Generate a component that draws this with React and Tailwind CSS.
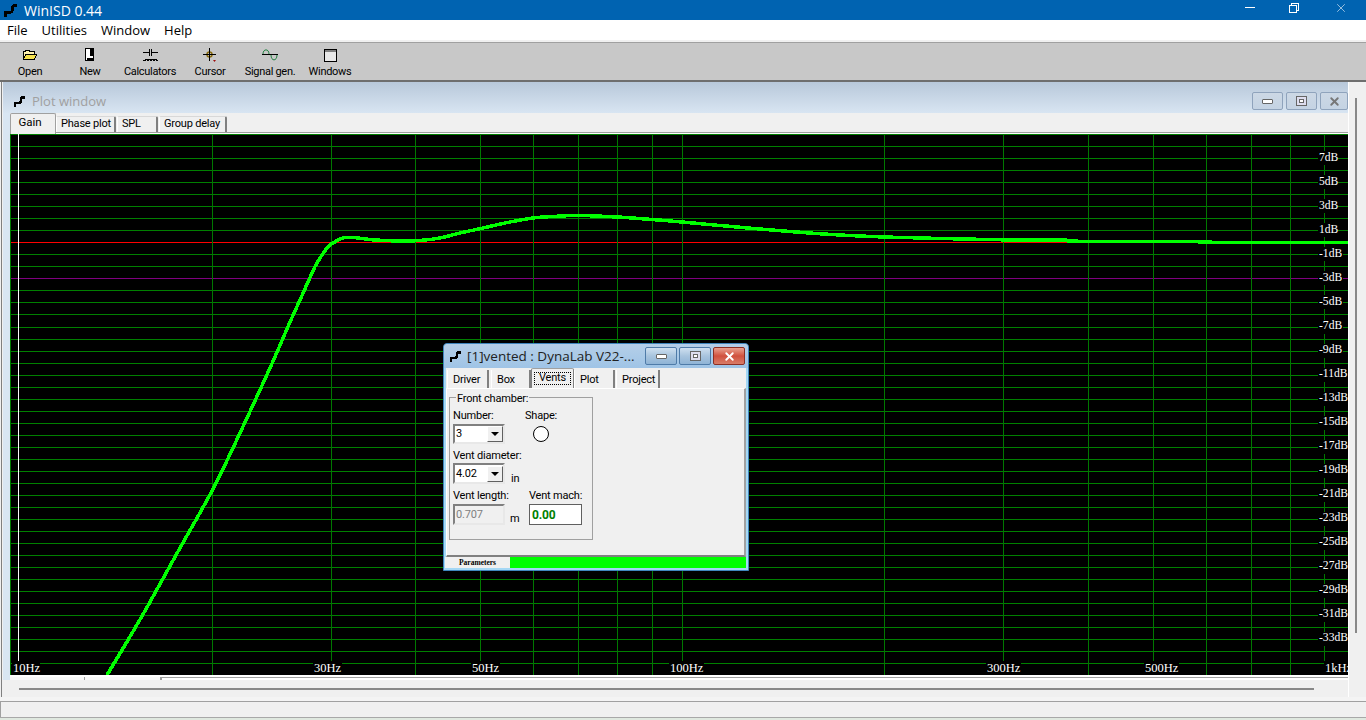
import { X } from 'lucide-react';

const UI_FONT = { fontFamily: '"Open Sans", "Liberation Sans", sans-serif' };
const SMALL_FONT = { fontFamily: 'Roboto, "Liberation Sans", sans-serif' };

const MENU = ['File', 'Utilities', 'Window', 'Help'];

const TOOLS = [
  { label: 'Open', icon: OpenIcon },
  { label: 'New', icon: NewIcon },
  { label: 'Calculators', icon: CalcIcon },
  { label: 'Cursor', icon: CursorIcon },
  { label: 'Signal gen.', icon: SignalIcon },
  { label: 'Windows', icon: WindowsIcon },
];

// plot scale: 12.03px per dB, 0dB sits on row 242
const rowOf = (k) => Math.round(242.3 + 12.03 * k);
const H_LINES = Array.from({ length: 45 }, (_, i) => i - 9);
const V_LINES = [10, 212, 331, 415, 480, 533, 578, 617, 652, 682, 884, 1003, 1088, 1153, 1206, 1251, 1290, 1324];
const DB_LABELS = [7, 5, 3, 1, -1, -3, -5, -7, -9, -11, -13, -15, -17, -19, -21, -23, -25, -27, -29, -31, -33];
const HZ_LABELS = [
  ['10Hz', 12, 28],
  ['30Hz', 313, 29],
  ['50Hz', 471, 29],
  ['100Hz', 669, 35],
  ['300Hz', 986, 35],
  ['500Hz', 1144, 35],
  ['1kHz', 1324, 24],
];
const CURVE = [
  [107, 675], [128, 640], [150, 602], [180, 548], [213, 489], [240, 433], [270, 368], [290, 322], [300, 300],
  [312, 273], [317, 263], [327, 248], [333, 243], [343, 238], [353, 237.5], [375, 240], [400, 241], [420, 240.5],
  [440, 238], [460, 233], [480, 228.7], [505, 223], [533, 218], [553, 216.5], [578, 215.5], [617, 217], [652, 219.5],
  [682, 222], [720, 225.5], [760, 229], [800, 232.3], [840, 235], [884, 237], [940, 238.5], [1003, 239.8], [1074, 240.3],
  [1076, 241.3], [1204, 241.3], [1206, 242.3], [1348, 242.3],
];

// catmull-rom through the measured points so the knee doesn't kink
function curvePath(pts) {
  let d = `M${pts[0][0]} ${pts[0][1]}`;
  for (let i = 0; i < pts.length - 1; i++) {
    const p0 = pts[Math.max(i - 1, 0)];
    const p1 = pts[i];
    const p2 = pts[i + 1];
    const p3 = pts[Math.min(i + 2, pts.length - 1)];
    const c1x = p1[0] + (p2[0] - p0[0]) / 6;
    const c1y = p1[1] + (p2[1] - p0[1]) / 6;
    const c2x = p2[0] - (p3[0] - p1[0]) / 6;
    const c2y = p2[1] - (p3[1] - p1[1]) / 6;
    d += ` C${c1x} ${c1y} ${c2x} ${c2y} ${p2[0]} ${p2[1]}`;
  }
  return d;
}

function AppIcon({ className = '' }) {
  return (
    <svg viewBox="0 0 13 13" className={className} fill="none" stroke="black" strokeWidth="2.800" shapeRendering="crispEdges">
      <path d="M2 13 V8.500 H7 Q8.500 8.500 8.500 6 Q8.500 2.500 10.500 2.500 H13" />
    </svg>
  );
}

function OpenIcon() {
  return (
    <svg width="16" height="12" viewBox="0 0 16 12" shapeRendering="crispEdges">
      <path d="M1.500 10.500 V2.500 H3 L4 1.500 H7 L8 2.500 H12.500 V4.500" fill="#fff3b0" stroke="black" />
      <path d="M1.500 10.500 L4 5 H15 L12.500 10.500 Z" fill="#f4e04d" stroke="black" />
    </svg>
  );
}

function NewIcon() {
  return (
    <svg width="10" height="14" viewBox="0 0 10 14" shapeRendering="crispEdges">
      <rect x="0.500" y="0.500" width="8" height="12" fill="white" stroke="black" />
      <rect x="5" y="1" width="4" height="7" fill="black" />
      <rect x="2" y="10" width="6" height="3" fill="black" />
    </svg>
  );
}

function CalcIcon() {
  return (
    <svg width="15" height="13" viewBox="0 0 15 13" fill="none" stroke="black" shapeRendering="crispEdges">
      <path d="M0 3.500 H6 M6.500 0 V7 M8.500 0 V7 M9 3.500 H15" />
      <path d="M0 11.500 H2 M13 11.500 H15 M2 12 V10.500 H4 V12 M5 12 V10.500 H7 V12 M8 12 V10.500 H10 V12 M11 12 V10.500 H13 V12" />
    </svg>
  );
}

function CursorIcon() {
  return (
    <svg width="14" height="14" viewBox="0 0 14 14" fill="none" stroke="black">
      <circle cx="6.500" cy="6.500" r="2.500" stroke="#8a6d10" strokeWidth="1.500" />
      <path d="M6.500 0 V13 M0 6.500 H13" shapeRendering="crispEdges" />
      <path d="M10 12 H13 L11.500 14 Z" fill="#a01010" stroke="none" />
    </svg>
  );
}

function SignalIcon() {
  return (
    <svg width="16" height="12" viewBox="0 0 16 12" fill="none">
      <path d="M0 5.500 H16" stroke="black" shapeRendering="crispEdges" />
      <path d="M1 5 C1 -0.500 7 -0.500 7 5" stroke="#208040" />
      <path d="M9 6 C9 12.500 15 12.500 15 6" stroke="#208040" />
    </svg>
  );
}

function WindowsIcon() {
  return (
    <svg width="13" height="13" viewBox="0 0 13 13" shapeRendering="crispEdges">
      <rect x="0.500" y="0.500" width="12" height="12" fill="#e8e8e8" stroke="black" />
      <rect x="1" y="1" width="11" height="2" fill="#808080" />
    </svg>
  );
}

function TitleBar() {
  return (
    <div className="flex h-5 shrink-0 items-center bg-[#0063b1] text-white">
      <AppIcon className="ml-[3px] h-[14px] w-[14px]" />
      <span className="ml-[7px] text-[14px]" style={UI_FONT}>WinISD 0.44</span>
      <div className="ml-auto flex items-center">
        <div className="mb-[6px] mr-[34px] h-px w-[10px] bg-white" />
        <svg width="11" height="10" viewBox="0 0 11 10" fill="none" stroke="white" className="mb-[5px] mr-[34px]" shapeRendering="crispEdges">
          <rect x="0.500" y="2.500" width="7" height="7" />
          <path d="M2.500 2.500 V0.500 H9.500 V7.500 H7.500" />
        </svg>
        <X size={14} strokeWidth={1} className="mb-[5px] mr-[18px]" />
      </div>
    </div>
  );
}

function MenuBar() {
  return (
    <div className="flex h-5 shrink-0 items-center gap-[14px] bg-white pl-[7px] pt-[2px] text-[13px] text-black" style={UI_FONT}>
      {MENU.map((m) => <span key={m}>{m}</span>)}
    </div>
  );
}

function Toolbar() {
  return (
    <div className="shrink-0">
      <div className="h-[2px] bg-[#f0f0f0]" />
      <div className="h-px bg-[#a0a0a0]" />
      <div className="flex h-[37px] bg-[#c8c8c8]">
        {TOOLS.map((t) => {
          const Icon = t.icon;
          return (
            <div key={t.label} className="flex w-[60px] flex-col items-center pt-[5px]">
              <div className="flex h-[14px] items-center justify-center"><Icon /></div>
              <span className="mt-[3px] whitespace-nowrap text-[11px] leading-[14px] tracking-[-0.3px] text-black" style={SMALL_FONT}>{t.label}</span>
            </div>
          );
        })}
      </div>
      <div className="h-[2px] bg-[#6e6e6e]" />
    </div>
  );
}

function AeroButton({ kind, close, inactive, width }) {
  const look = close
    ? 'border-[#8c2f24] bg-gradient-to-b from-[#e8a090] via-[#d0503e] to-[#d87c68]'
    : inactive
      ? 'border-[#8fa3bc] bg-gradient-to-b from-[#ccd8e5] to-[#c4d3e3]'
      : 'border-[#4f7ba8] bg-gradient-to-b from-[#cfe0f0] via-[#a8c4de] to-[#8fb4d6]';
  return (
    <div className={`flex h-[18px] items-center justify-center rounded-[2px] border ${look}`} style={{ width }}>
      {kind === 'min' && <div className="h-[5px] w-[11px] rounded-[1px] border border-[#666] bg-white" />}
      {kind === 'max' && (
        <div className="flex h-[10px] w-[11px] items-center justify-center border border-[#666] bg-[#dde]">
          <div className="h-[4px] w-[5px] border border-[#666] bg-white" />
        </div>
      )}
      {kind === 'close' && <X size={13} strokeWidth={3.5} className={close ? 'text-white' : 'text-[#777]'} />}
    </div>
  );
}

function PlotTab({ label, active, width }) {
  if (active) {
    return (
      <div className="relative z-10 flex h-[21px] items-center justify-center rounded-t-[2px] border-x border-t border-x-[#a0a0a0] border-t-[#a0a0a0] bg-[#f0f0f0] pb-[2px] pr-[6px] text-[11.5px] text-black" style={{ ...SMALL_FONT, width }}>
        {label}
      </div>
    );
  }
  return (
    <div className="mt-[3px] flex h-4 items-center whitespace-nowrap rounded-t-[2px] border-t border-l border-r-2 border-t-[#d8d8d8] border-l-white border-r-[#808080] pl-[4px] text-[11px] tracking-[-0.2px] text-black" style={{ ...SMALL_FONT, width }}>
      {label}
    </div>
  );
}

function Chart() {
  return (
    <svg viewBox="10 134 1338 541" className="block h-[541px] w-[1338px] bg-black" shapeRendering="crispEdges">
      {H_LINES.map((k) => (
        <rect key={k} x="10" y={rowOf(k)} width="1338" height="1" fill={k === 0 ? '#ff0000' : k === 3 ? '#800080' : '#008000'} />
      ))}
      {V_LINES.map((x) => <rect key={x} x={x} y="134" width="1" height="541" fill="#007800" />)}
      <rect x="18" y="134" width="1" height="541" fill="white" />
      <path d={curvePath(CURVE)} fill="none" stroke="#00ff00" strokeWidth="3.500" />
      {DB_LABELS.map((db) => {
        const y = rowOf(-db);
        const text = `${db}dB`;
        const w = text.length === 3 ? 20 : text.length === 4 ? 25 : 30;
        return (
          <g key={db}>
            <rect x="1318" y={y - 7} width={w} height="14" fill="black" />
            <text x="1319" y={db <= -7 ? y + 2 : y + 3} fill="white" fontSize="11.600" fontFamily='"Liberation Serif", serif' shapeRendering="auto">{text}</text>
          </g>
        );
      })}
      {HZ_LABELS.map(([text, x, w]) => (
        <g key={text}>
          <rect x={x} y="661" width={w} height="14" fill="black" />
          <text x={x + 1} y="672" fill="white" fontSize="12.500" fontFamily='"Liberation Serif", serif' shapeRendering="auto">{text}</text>
        </g>
      ))}
    </svg>
  );
}

function PlotWindow() {
  return (
    <div className="ml-px flex h-[598px] w-[1347px] border-l border-[#808080] pl-px">
      <div className="w-full bg-[#d9e6f3]">
        <div className="flex h-[31px] items-center bg-gradient-to-b from-[#b8c8da] to-[#d8e5f2] pl-[10px] pt-[7px]">
          <AppIcon className="h-[12px] w-[12px]" />
          <span className="ml-[7px] mt-[2px] text-[13px] text-[#a0a0a0]" style={UI_FONT}>Plot window</span>
          <div className="ml-auto flex gap-[3px]">
            <AeroButton kind="min" inactive width={31} />
            <AeroButton kind="max" inactive width={31} />
            <AeroButton kind="close" inactive width={28} />
          </div>
        </div>
        <div className="flex">
          <div className="w-[7px] shrink-0" />
          <div className="w-[1338px]">
            <div className="h-[21px] bg-[#f0f0f0]">
              <div className="flex h-[19px] items-start">
                <PlotTab label="Gain" active width={46} />
                <PlotTab label="Phase plot" width={60} />
                <div className="w-px" />
                <PlotTab label="SPL" width={41} />
                <div className="w-px" />
                <PlotTab label="Group delay" width={68} />
              </div>
              <div className="h-px bg-[#a0a0a0]" />
              <div className="h-px bg-white" />
            </div>
            <Chart />
            <div className="h-[2px] bg-white" />
            <div className="flex h-[3px] bg-[#a0a0a0]">
              <div className="w-[74px] bg-[#f8f8f8]" />
              <div className="ml-px w-[75px] bg-[#f8f8f8]" />
              <div className="ml-[2px] flex-1 border-t border-[#a0a0a0] bg-white" />
            </div>
          </div>
        </div>
      </div>
    </div>
  );
}

function Combo({ value, height }) {
  return (
    <div className="flex w-[52px] items-center border-2 border-t-[#808080] border-l-[#808080] border-r-[#e8e8e8] border-b-[#e8e8e8] bg-white pl-[1px] text-black" style={{ height }}>
      <span className="flex-1">{value}</span>
      <div className="flex h-[16px] w-[16px] items-center justify-center border border-t-white border-l-white border-r-[#606060] border-b-[#606060] bg-[#f0f0f0]">
        <div className="h-0 w-0 border-x-[4px] border-t-[4px] border-x-transparent border-t-black" />
      </div>
    </div>
  );
}

function DialogTab({ label, width, active }) {
  if (active) {
    return (
      <div className="flex h-[20px] items-center justify-center rounded-t-[2px] border-x border-t border-x-[#808080] border-t-[#a0a0a0] bg-[#f0f0f0] p-[2px]" style={{ width }}>
        <span className="flex h-[13px] w-full items-center justify-center border border-dotted border-black">{label}</span>
      </div>
    );
  }
  return (
    <div className="mt-[2px] flex h-[18px] items-center border-l border-r-2 border-l-white border-r-[#808080] pl-[5px] pt-[3px]" style={{ width }}>
      {label}
    </div>
  );
}

function VentsDialog() {
  return (
    <div className="absolute left-[443px] top-[343px] flex h-[228px] w-[306px] flex-col rounded-t-[4px] border border-[#3f86bd] bg-[#a5d8f5]">
      <div className="flex h-[24px] shrink-0 items-center rounded-t-[4px] bg-gradient-to-b from-[#b5cfe8] to-[#9fc4e6] pl-[5px] pr-[3px]" style={UI_FONT}>
        <AppIcon className="h-[12px] w-[12px]" />
        <span className="ml-[6px] mt-px whitespace-nowrap text-[13.5px] text-[#222]">[1]vented : DynaLab V22-...</span>
        <div className="ml-auto flex gap-[2px]">
          <AeroButton kind="min" width={32} />
          <AeroButton kind="max" width={32} />
          <AeroButton kind="close" close width={32} />
        </div>
      </div>
      <div className="mx-[2px] mb-[2px] flex min-h-0 flex-1 flex-col bg-[#f0f0f0] text-[11px] tracking-[-0.2px] text-black" style={SMALL_FONT}>
        <div className="flex h-[20px] shrink-0 items-start pl-px">
          <DialogTab label="Driver" width={42} />
          <div className="w-[2px]" />
          <DialogTab label="Box" width={40} />
          <DialogTab label="Vents" width={43} active />
          <DialogTab label="Plot" width={41} />
          <div className="w-px" />
          <DialogTab label="Project" width={44} />
        </div>
        <div className="h-[169px] border-t border-r-2 border-b-2 border-l border-t-white border-r-[#a0a0a0] border-b-[#808080] border-l-white pl-[2px] pt-[8px]">
          <div className="relative h-[143px] w-[144px] border border-[#a0a0a0] pl-[3px] pt-[11px] leading-[14px]">
            <span className="absolute -top-[6px] left-[6px] bg-[#f0f0f0] px-px">Front chamber:</span>
            <div className="flex">
              <span className="w-[72px]">Number:</span>
              <span>Shape:</span>
            </div>
            <div className="mt-px flex items-center">
              <Combo value="3" height={20} />
              <div className="ml-[28px] h-4 w-4 rounded-full border border-black bg-white" />
            </div>
            <div className="mt-[5px]">Vent diameter:</div>
            <div className="flex items-end">
              <Combo value="4.02" height={21} />
              <span className="-mb-[2px] ml-[6px]">in</span>
            </div>
            <div className="mt-[5px] flex">
              <span className="w-[76px]">Vent length:</span>
              <span>Vent mach:</span>
            </div>
            <div className="mt-px flex items-end">
              <div className="flex h-[21px] w-[52px] items-center border-2 border-t-[#808080] border-l-[#808080] border-r-[#e8e8e8] border-b-[#e8e8e8] bg-[#f0f0f0] pl-[1px] text-[#808080]">0.707</div>
              <span className="-mb-px ml-[5px] w-[19px]">m</span>
              <div className="flex h-[21px] w-[53px] items-center border border-[#606060] bg-white pl-[2px] text-[12px] font-bold text-[#008000]">0.00</div>
            </div>
          </div>
        </div>
        <div className="flex h-[11px] shrink-0">
          <div className="-ml-px flex w-[65px] items-center justify-center bg-[#f0f0f0] text-[7.5px] font-semibold tracking-normal" style={{ fontFamily: '"Liberation Serif", serif' }}>Parameters</div>
          <div className="flex-1 bg-[#00ff00]" />
        </div>
      </div>
    </div>
  );
}

export default function App() {
  return (
    <div className="relative flex h-[720px] w-[1366px] flex-col overflow-hidden bg-[#f0f0f0]">
      <TitleBar />
      <MenuBar />
      <Toolbar />
      <div className="flex h-[615px] shrink-0">
        <div className="w-[1348px]">
          <PlotWindow />
          <div className="ml-px flex h-[17px] items-center border-l border-[#808080] pl-[17px]">
            <div className="h-[2px] w-[1295px] bg-[#888888]" />
          </div>
        </div>
        <div className="flex flex-1 border-l border-white pl-[6px] pt-[16px]">
          <div className="h-[535px] w-[2px] bg-[#888888]" />
        </div>
      </div>
      <div className="h-[5px] shrink-0 border-b border-[#a0a0a0] bg-[#f4f4f4]" />
      <div className="h-[15px] shrink-0 border-l border-[#a0a0a0] bg-[#f0f0f0]" />
      <div className="h-px shrink-0 bg-[#a8a8a8]" />
      <div className="flex-1 bg-[#dfe8df]" />
      <VentsDialog />
    </div>
  );
}
